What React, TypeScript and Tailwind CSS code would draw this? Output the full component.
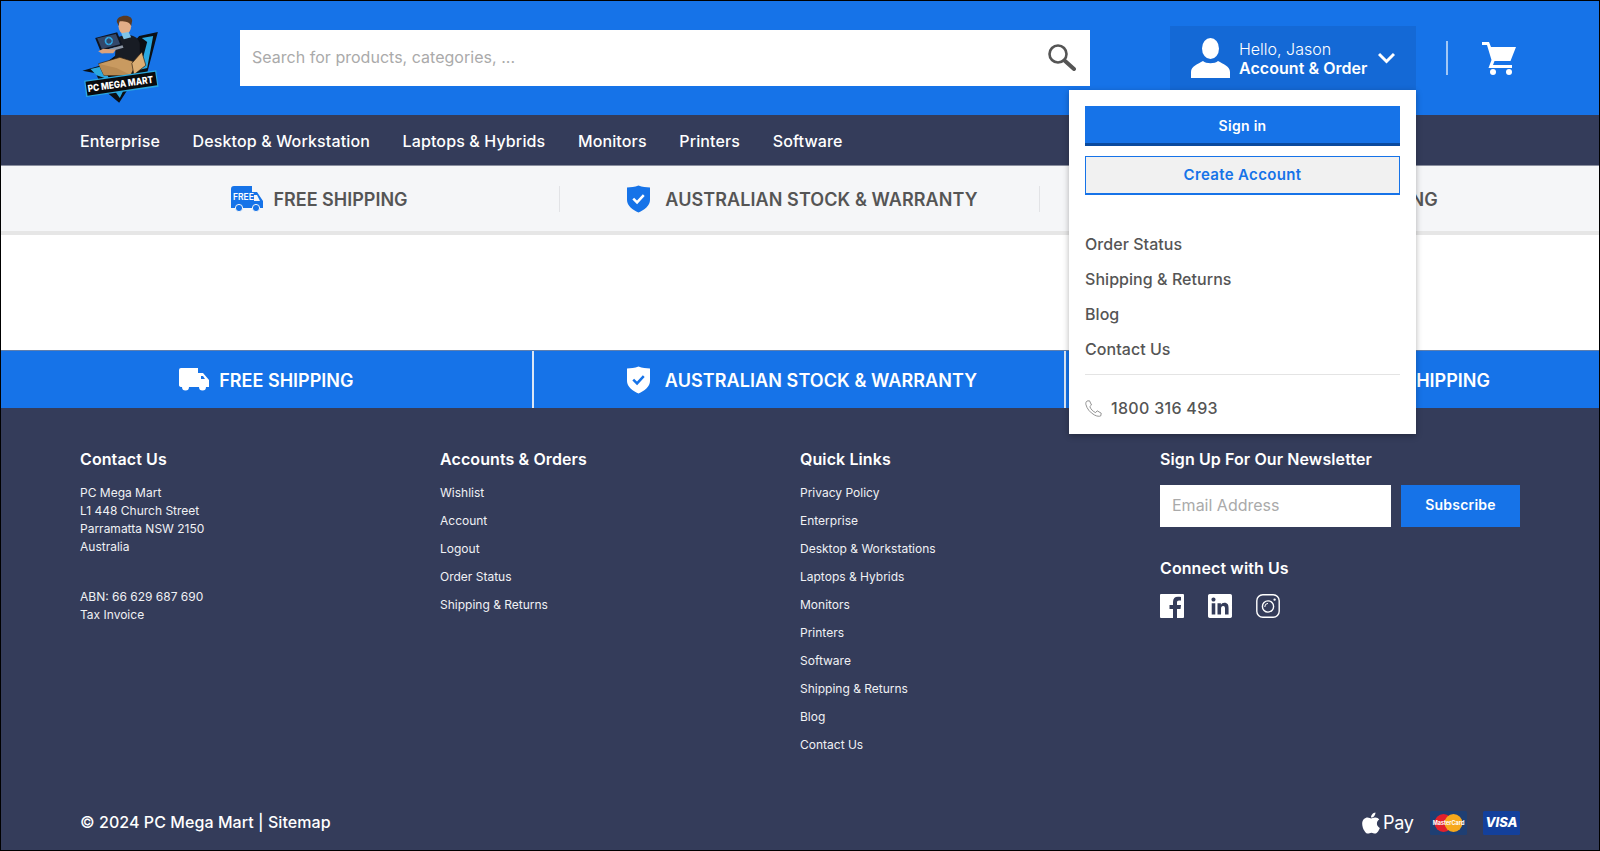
import React from "react";
import { FaApple, FaLinkedin } from "react-icons/fa";

const accountLinks = ["Wishlist", "Account", "Logout", "Order Status", "Shipping & Returns"];
const quickLinks = [
  "Privacy Policy",
  "Enterprise",
  "Desktop & Workstations",
  "Laptops & Hybrids",
  "Monitors",
  "Printers",
  "Software",
  "Shipping & Returns",
  "Blog",
  "Contact Us",
];
const navItems = ["Enterprise", "Desktop & Workstation", "Laptops & Hybrids", "Monitors", "Printers", "Software"];

const Logo = () => (
  <svg viewBox="70 35 230 270" className="w-[77px] h-[90px] ml-[3px] overflow-visible">
    <path d="M294 92 L238 104 L222 122 L130 190 L68 208 L108 216 L128 262 L178 304 L205 262 L262 215 Z" fill="#0b0f14" />
    <path d="M280 104 L246 110 L262 122 L240 205 L262 200 Z" fill="#2aa8e0" />
    <path d="M92 203 L128 195 L150 235 L110 222 Z" fill="#2aa8e0" />
    <path d="M160 262 L196 256 L180 290 Z" fill="#2aa8e0" />
    <path d="M168 112 C195 92 236 100 240 128 L240 178 L165 182 Z" fill="#181c24" />
    <path d="M106 110 L172 93 L188 132 L122 150 Z" fill="#0f1420" />
    <path d="M112 111 L168 98 L181 129 L126 143 Z" fill="#33486a" />
    <path d="M122 150 L188 132 L191 139 L126 157 Z" fill="#8f98a6" />
    <circle cx="147" cy="119" r="10" fill="none" stroke="#31a8e6" strokeWidth="5" />
    <path d="M147 109 L147 129 M147 119 L158 119" stroke="#33486a" strokeWidth="2" />
    <path d="M115 150 L130 142 L168 145 L160 156 L125 156 Z" fill="#d9a27c" />
    <ellipse cx="195" cy="75" rx="19" ry="24" fill="#e3ad87" />
    <path d="M171 62 C169 40 216 36 217 58 L214 74 C208 58 190 62 178 60 L177 74 Z" fill="#5b3a22" />
    <path d="M184 96 L206 92 L214 108 L192 114 Z" fill="#7fc4e8" />
    <path d="M116 187 L180 168 L232 184 L212 222 L132 222 Z" fill="#c99a60" stroke="#2a1d10" strokeWidth="2" />
    <path d="M116 187 L170 200 L214 222 L132 222 Z" fill="#b88a52" />
    <path d="M216 186 L246 152 L258 192 L222 220 Z" fill="#dcae74" stroke="#2a1d10" strokeWidth="2" />
    <path d="M73 238 L289 207 L296 256 L79 287 Z" fill="#2aa8e0" />
    <path d="M77 241 L286 211 L292 252 L83 283 Z" fill="#090b0e" />
    <text
      x="85"
      y="272"
      transform="rotate(-8 85 272)"
      fill="#ffffff"
      fontSize="29"
      fontWeight="800"
      textLength="198"
      lengthAdjust="spacingAndGlyphs"
      style={{ fontFamily: "Inter, sans-serif" }}
    >
      PC MEGA MART
    </text>
  </svg>
);

const SearchIcon = () => (
  <svg viewBox="0 0 29 28" className="w-[29px] h-[28px]" fill="none" stroke="#555555">
    <circle cx="11" cy="11" r="8.5" strokeWidth="2.6" />
    <path d="M17.5 17.5 L27 26" strokeWidth="4" strokeLinecap="round" />
  </svg>
);

const UserIcon = () => (
  <svg viewBox="0 0 39 40" className="w-[39px] h-[40px] shrink-0" fill="#ffffff">
    <ellipse cx="19.5" cy="10.5" rx="8.5" ry="10.5" />
    <path d="M0 40 L0 34 C0 28 7 26 12 23 C15 26 24 26 27 23 C32 26 39 28 39 34 L39 40 Z" />
  </svg>
);

const CartIcon = () => (
  <svg viewBox="0 0 34 34" className="w-[34px] h-[34px]" fill="#ffffff">
    <path d="M0 1 H7 L9 6 H34 L28.5 20 H12.5 L11 24 H30 V27 H6.5 L9.5 19 L5 4 H0 Z" />
    <circle cx="11" cy="31" r="3" />
    <circle cx="27" cy="31" r="3" />
  </svg>
);

const FreeTruck = () => (
  <svg viewBox="0 0 32 26" className="w-[32px] h-[26px] shrink-0">
    <path d="M0 3 Q0 0 3 0 H21 V6 H26 L32 15 V22 H0 Z" fill="#1673e8" />
    <path d="M23 9 H26 L29 15 H23 Z" fill="#f5f6f8" />
    <circle cx="8" cy="22" r="3.6" fill="#1673e8" stroke="#f5f6f8" />
    <circle cx="25" cy="22" r="3.6" fill="#1673e8" stroke="#f5f6f8" />
    <text x="2" y="14" fill="#ffffff" fontSize="8.5" fontWeight="600" style={{ fontFamily: "Inter, sans-serif" }}>
      FREE
    </text>
  </svg>
);

const PlainTruck = () => (
  <svg viewBox="0 0 30 24" className="w-[30px] h-[24px] shrink-0">
    <path d="M0 2 Q0 0 2 0 H19 V5 H24 L30 12 V19 H27 A3.5 3.5 0 0 1 20 19 H10 A3.5 3.5 0 0 1 3 19 Q0 19 0 17 Z" fill="#ffffff" />
    <path d="M22 8 H24 L26 11 H22 Z" fill="#1673e8" />
  </svg>
);

const Shield = ({ fill, tick }: { fill: string; tick: string }) => (
  <svg viewBox="0 0 24 28" className="w-[23px] h-[28px] shrink-0">
    <path d="M12 0 C16 1.5 20 2 24 2 V15 C24 21 18 25.5 12 28 C6 25.5 0 21 0 15 V2 C4 2 8 1.5 12 0 Z" fill={fill} />
    <path d="M6.5 13.5 L10.5 17.5 L17.5 10" fill="none" stroke={tick} strokeWidth="2.6" />
  </svg>
);

const PhoneIcon = () => (
  <svg viewBox="0 0 17 17" className="w-[17px] h-[17px] shrink-0" fill="none" stroke="#777777" strokeWidth="0.8">
    <path d="M2 1 L4.5 0.8 L6.5 5 L4.8 6.6 C6 9.5 8 11.5 10.6 12.6 L12.2 10.8 L16.2 13.2 L15.8 15.8 C14.5 16.6 12 16.4 9.5 15 C5 12.6 1.8 8.5 0.9 4.5 C0.6 3 1 1.8 2 1 Z" />
  </svg>
);

const Facebook = () => (
  <svg viewBox="0 0 24 24" className="w-[24px] h-[24px]">
    <rect width="24" height="24" rx="1" fill="#ffffff" />
    <path d="M17 24 V15 H20.5 L21 11 H17 V8.5 C17 7.3 17.5 6.5 19 6.5 H21 V3 C20 2.9 19 2.8 18 2.8 C14.8 2.8 13 4.7 13 8 V11 H9.5 V15 H13 V24 Z" fill="#343c5a" />
  </svg>
);

const Instagram = () => (
  <svg viewBox="0 0 24 24" className="w-[24px] h-[24px]" fill="none" stroke="#ffffff" strokeWidth="1.4">
    <rect x="0.8" y="0.8" width="22.4" height="22.4" rx="6" />
    <circle cx="12" cy="12.5" r="5.6" />
    <path d="M8.8 13 A3.4 3.4 0 0 1 12 9.4" strokeWidth="1" />
    <circle cx="18.6" cy="5.6" r="0.5" fill="#ffffff" />
  </svg>
);

const MasterCard = () => (
  <svg viewBox="0 0 37 24" className="w-[37px] h-[24px]">
    <rect width="37" height="24" rx="1.5" fill="#1f3f73" />
    <circle cx="13.5" cy="12" r="9" fill="#e2202c" />
    <circle cx="23.5" cy="12" r="9" fill="#f6a81c" />
    <text x="18.5" y="14" textAnchor="middle" fill="#ffffff" fontSize="5.5" fontWeight="700" style={{ fontFamily: "Inter, sans-serif" }}>
      MasterCard
    </text>
  </svg>
);

const FooterHeading = ({ children }: { children: React.ReactNode }) => (
  <h3 className="text-base leading-6 font-semibold tracking-[0.1px] text-white">{children}</h3>
);

const FooterLinks = ({ items }: { items: string[] }) => (
  <ul className="mt-[8px]">
    {items.map((item) => (
      <li key={item} className="h-[28px] flex items-center text-xs text-[#f0f1f4]">
        {item}
      </li>
    ))}
  </ul>
);

const AccountMenu = () => (
  <div className="absolute top-full right-0 z-10 w-[347px] bg-white px-[16px] pt-[16px] pb-[14px] shadow-[0_2px_6px_rgba(0,0,0,0.3)]">
    <button className="block w-full h-[40px] pt-[2px] bg-[#1673e8] border-b-[3px] border-[#0a4a9e] text-sm font-semibold text-white tracking-[0.3px]">
      Sign in
    </button>
    <button className="block w-full h-[39px] mt-[10px] pt-[1px] bg-[#f1f1f1] border border-b-2 border-[#1673e8] text-[15px] font-semibold text-[#1673e8] tracking-[0.35px]">
      Create Account
    </button>
    <ul className="mt-[31px]">
      {["Order Status", "Shipping & Returns", "Blog", "Contact Us"].map((item) => (
        <li key={item} className="h-[35px] flex items-center text-base font-medium tracking-[0.05px] text-[#555555]">
          {item}
        </li>
      ))}
    </ul>
    <div className="mt-[8px] h-px bg-[#e4e4e4]" />
    <div className="mt-[21px] h-[24px] flex items-center gap-[9px] text-base font-medium text-[#555555] tracking-[0.3px]">
      <PhoneIcon />
      1800 316 493
    </div>
  </div>
);

const App = () => {
  return (
    <div
      className="relative h-[851px] flex flex-col border border-black overflow-hidden bg-white"
      style={{ fontFamily: "Inter, 'Liberation Sans', sans-serif" }}
    >
      {/* header */}
      <header className="h-[114px] shrink-0 flex items-center pl-[79px] bg-[#1673e8]">
        <div className="w-[160px]">
          <Logo />
        </div>
        <div className="w-[850px] h-[56px] flex items-center bg-white pl-[12px] pr-[14px]">
          <input
            placeholder="Search for products, categories, ..."
            className="flex-1 bg-transparent pb-[2px] text-base tracking-[0.02px] text-[#555555] placeholder:text-[#aaaaaa] outline-none"
          />
          <div className="-mt-[2px]">
            <SearchIcon />
          </div>
        </div>
        <div className="relative ml-[80px] w-[246px] h-[64px] flex items-center pl-[21px] bg-[#1469d6] text-white">
          <UserIcon />
          <div className="ml-[9px] pt-[2px] text-base leading-[19px]">
            <div className="font-light">Hello, Jason</div>
            <div className="font-semibold tracking-[0.05px]">Account &amp; Order</div>
          </div>
          <svg viewBox="0 0 17 12" className="w-[17px] h-[12px] ml-[10px]" fill="none" stroke="#ffffff" strokeWidth="3">
            <path d="M1 2 L8.5 9.5 L16 2" />
          </svg>
          <AccountMenu />
        </div>
        <div className="ml-[30px] w-[2px] h-[34px] bg-white/60" />
        <div className="ml-[34px]">
          <CartIcon />
        </div>
      </header>

      {/* nav */}
      <nav className="h-[51px] shrink-0 flex items-center gap-[32.6px] pl-[79px] pt-[2px] bg-[#343c5a] border-b border-[#8a8f9f] text-base font-medium tracking-[0.13px] text-white">
        {navItems.map((item) => (
          <span key={item}>{item}</span>
        ))}
      </nav>

      {/* usp strip */}
      <div className="h-[69px] shrink-0 grid grid-cols-3 items-center px-[79px] bg-[#f5f6f8] border-b-4 border-[#e6e6e6] text-lg font-semibold text-[#555555]">
        <div className="h-[26px] flex items-center justify-center gap-[10px] border-r border-[#e2e3e6]">
          <FreeTruck />
          <span className="pt-[2px]">FREE SHIPPING</span>
        </div>
        <div className="h-[26px] flex items-center justify-center gap-[15px] pl-[6px] border-r border-[#e2e3e6]">
          <Shield fill="#1673e8" tick="#ffffff" />
          <span className="pt-[2px] tracking-[0.08px]">AUSTRALIAN STOCK &amp; WARRANTY</span>
        </div>
        <div className="h-[26px] flex items-center justify-center gap-[10px] pl-[4px]">
          <FreeTruck />
          <span className="pt-[2px]">SAME DAY EXPRESS SHIPPING</span>
        </div>
      </div>

      <div className="h-[115px] shrink-0" />

      {/* blue usp bar */}
      <div className="h-[58px] shrink-0 grid grid-cols-3 bg-[#1673e8] border-t border-[#5f7fae] text-lg font-semibold text-white">
        <div className="flex items-center justify-center gap-[10px] border-r-2 border-[#dbe6f5]">
          <PlainTruck />
          <span className="pt-[3px]">FREE SHIPPING</span>
        </div>
        <div className="flex items-center justify-center gap-[15px] pl-[6px] border-r-2 border-[#dbe6f5]">
          <div className="pt-[1px]">
            <Shield fill="#ffffff" tick="#1673e8" />
          </div>
          <span className="pt-[3px] tracking-[0.08px]">AUSTRALIAN STOCK &amp; WARRANTY</span>
        </div>
        <div className="flex items-center justify-center gap-[10px] pl-[5px]">
          <PlainTruck />
          <span className="pt-[3px]">SAME DAY EXPRESS SHIPPING</span>
        </div>
      </div>

      {/* footer */}
      <footer className="flex-1 flex flex-col justify-between bg-[#343c5a] px-[79px] pt-[39px] pb-[15px]">
        <div className="grid grid-cols-4">
          <div>
            <FooterHeading>Contact Us</FooterHeading>
            <div className="mt-[13px] text-xs leading-[18px] text-[#f0f1f4]">
              <div>PC Mega Mart</div>
              <div>L1 448 Church Street</div>
              <div>Parramatta NSW 2150</div>
              <div>Australia</div>
              <div className="mt-[32px]">ABN: 66 629 687 690</div>
              <div>Tax Invoice</div>
            </div>
          </div>
          <div>
            <FooterHeading>Accounts &amp; Orders</FooterHeading>
            <FooterLinks items={accountLinks} />
          </div>
          <div>
            <FooterHeading>Quick Links</FooterHeading>
            <FooterLinks items={quickLinks} />
          </div>
          <div>
            <FooterHeading>Sign Up For Our Newsletter</FooterHeading>
            <div className="mt-[14px] flex gap-[10px]">
              <input
                placeholder="Email Address"
                className="w-[231px] h-[42px] px-[12px] pb-[2px] bg-white text-base text-[#555555] placeholder:text-[#aaaaaa] outline-none"
              />
              <button className="w-[119px] h-[42px] pb-[2px] bg-[#1673e8] text-sm font-semibold tracking-[0.2px] text-white">
                Subscribe
              </button>
            </div>
            <div className="mt-[29px]">
              <FooterHeading>Connect with Us</FooterHeading>
            </div>
            <div className="mt-[14px] flex gap-[24px] text-white">
              <Facebook />
              <FaLinkedin className="w-[24px] h-[24px] scale-[1.14]" />
              <Instagram />
            </div>
          </div>
        </div>
        <div className="h-[24px] flex items-center justify-between text-white">
          <div className="pb-[2px] text-base font-medium tracking-[0.06px]">© 2024 PC Mega Mart | Sitemap</div>
          <div className="flex items-center">
            <FaApple className="w-[24px] h-[24px]" />
            <span className="w-[30px] text-[18px] leading-none tracking-[-0.3px]">Pay</span>
            <div className="ml-[17px]">
              <MasterCard />
            </div>
            <div className="ml-[16px] w-[37px] h-[24px] flex items-center justify-center rounded-[1.5px] bg-[#13409c] text-[13px] font-extrabold italic text-white">
              VISA
            </div>
          </div>
        </div>
      </footer>
    </div>
  );
};

export default App;
